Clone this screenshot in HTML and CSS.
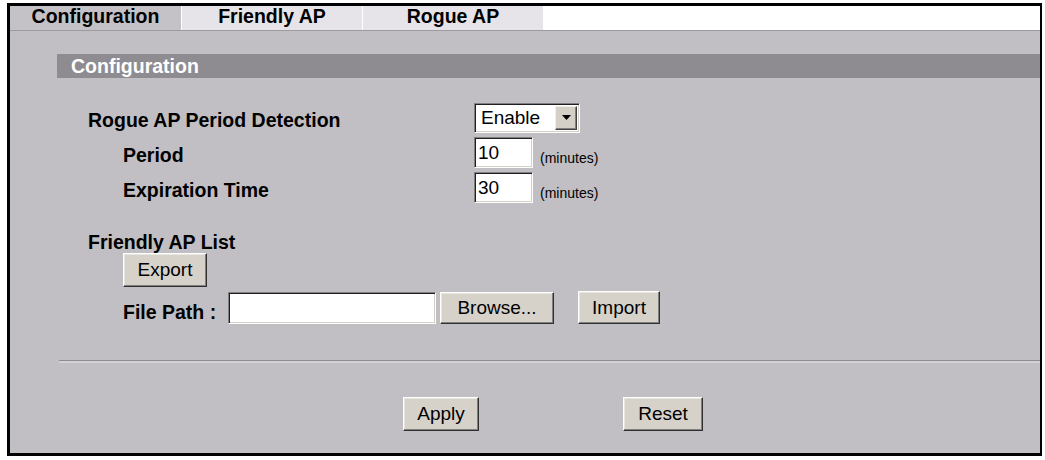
FILE: index.html
```html
<!DOCTYPE html>
<html>
<head>
<meta charset="utf-8">
<link rel="stylesheet" href="styles.css">
</head>
<body>
<div class="frame">
  <div class="tabs">
    <div class="tab active">Configuration</div>
    <div class="tab">Friendly AP</div>
    <div class="tab">Rogue AP</div>
    <div class="tab-rest"></div>
  </div>
  <div class="panel">
    <div class="section-head">Configuration</div>
    <div class="form">
      <div class="row">
        <div class="label">Rogue AP Period Detection</div>
        <div class="select"><span class="select-text">Enable</span><span class="select-btn"><svg width="9" height="5" viewBox="0 0 9 5"><path d="M0 0H9L4.5 5Z" fill="#000"/></svg></span></div>
      </div>
      <div class="row">
        <div class="label sub">Period</div>
        <div class="field short">10</div>
        <span class="unit">(minutes)</span>
      </div>
      <div class="row">
        <div class="label sub">Expiration Time</div>
        <div class="field short">30</div>
        <span class="unit">(minutes)</span>
      </div>
      <div class="list-title">Friendly AP List</div>
      <div class="export-row"><button class="btn export">Export</button></div>
      <div class="path-row">
        <span class="path-label">File Path :</span>
        <div class="field path"></div>
        <button class="btn browse">Browse...</button>
        <button class="btn import">Import</button>
      </div>
    </div>
    <div class="sep"></div>
    <div class="actions">
      <button class="btn apply">Apply</button>
      <button class="btn reset">Reset</button>
    </div>
  </div>
</div>
</body>
</html>
```

FILE: styles.css
```css
html, body {
  margin: 0;
  padding: 0;
  background: #ffffff;
}

body {
  font-family: "Liberation Sans", Arial, sans-serif;
  color: #000;
}

.frame {
  margin: 3px 3px 0 7px;
  width: 1035px;
  height: 453px;
  box-sizing: border-box;
  border: 3px solid #000;
  border-right-width: 2px;
  background: #c1bfc3;
  display: flex;
  flex-direction: column;
  overflow: hidden;
}

.tabs {
  display: flex;
  height: 24px;
  border-bottom: 1px solid #9d9b9f;
  background: #ffffff;
}

.tab {
  height: 24px;
  font-weight: bold;
  font-size: 19.5px;
  line-height: 20px;
  text-align: center;
  background: #e6e4e8;
  border-left: 1px solid #ffffff;
  width: 180px;
}

.tab.active {
  width: 171px;
  border-left: none;
  background: #c4c2c6;
}

.tab-rest {
  flex: 1;
  background: #ffffff;
}

.panel {
  flex: 1;
  padding-left: 47px;
}

.section-head {
  margin-top: 23px;
  height: 24px;
  box-sizing: border-box;
  padding: 2px 0 0 14px;
  background: #8e8c90;
  color: #ffffff;
  font-weight: bold;
  font-size: 19.5px;
  line-height: 20px;
}

.form {
  margin-top: 22px;
  padding-left: 31px;
}

.row {
  display: flex;
  align-items: center;
  height: 35px;
}

.label {
  width: 386px;
  font-weight: bold;
  font-size: 19.5px;
  line-height: 20px;
  padding-top: 5px;
}

.label.sub {
  width: 351px;
  padding-left: 35px;
}

.select {
  width: 106px;
  height: 30px;
  box-sizing: border-box;
  background: #ffffff;
  border-top: 1px solid #808080;
  border-left: 1px solid #808080;
  border-bottom: 1px solid #ffffff;
  border-right: 1px solid #ffffff;
  box-shadow: inset 1px 1px 0 #202020, inset -1px -1px 0 #d4d0c8;
  display: flex;
  align-items: center;
  padding: 2px;
}

.select-text {
  flex: 1;
  font-size: 19px;
  line-height: 22px;
  padding-left: 4px;
}

.select-btn {
  width: 22px;
  height: 24px;
  box-sizing: border-box;
  background: #d4d0c8;
  border-top: 1px solid #f0eee8;
  border-left: 1px solid #f0eee8;
  border-right: 1px solid #404040;
  border-bottom: 1px solid #404040;
  box-shadow: inset -1px -1px 0 #808080;
  display: flex;
  align-items: center;
  justify-content: center;
}

.field {
  height: 31px;
  box-sizing: border-box;
  background: #ffffff;
  border-top: 1px solid #808080;
  border-left: 1px solid #808080;
  border-bottom: 1px solid #ffffff;
  border-right: 1px solid #ffffff;
  box-shadow: inset 1px 1px 0 #202020, inset -1px -1px 0 #d4d0c8;
  font-size: 19px;
  line-height: 24px;
  padding: 3px 0 0 3px;
}

.field.short {
  width: 59px;
}

.unit {
  font-size: 14px;
  margin-left: 7px;
  padding-top: 10px;
}

.list-title {
  margin-top: 27px;
  font-weight: bold;
  font-size: 19.5px;
  line-height: 20px;
}

.export-row {
  margin-top: 1px;
  padding-left: 35px;
}

.btn {
  font-family: "Liberation Sans", Arial, sans-serif;
  font-size: 19px;
  color: #000;
  height: 34px;
  box-sizing: border-box;
  background: #d6d2ca;
  border-top: 1px solid #ffffff;
  border-left: 1px solid #ffffff;
  border-right: 1px solid #303030;
  border-bottom: 1px solid #303030;
  box-shadow: inset -1px -1px 0 #808080, inset 1px 1px 0 #e8e6e0;
  padding: 0;
  margin: 0;
  display: block;
}

.btn.export { width: 84px; }

.path-row {
  margin-top: 4px;
  padding-left: 35px;
  display: flex;
  align-items: center;
  height: 33px;
}

.path-label {
  width: 105px;
  font-weight: bold;
  font-size: 19.5px;
  line-height: 20px;
  padding-top: 8px;
}

.field.path {
  width: 208px;
  height: 32px;
}

.btn.browse {
  width: 114px;
  height: 32px;
  margin-left: 4px;
}

.btn.import {
  width: 82px;
  height: 33px;
  margin-left: 24px;
}

.sep {
  margin: 36px 0 0 2px;
  height: 1px;
  background: #8f8d91;
  border-bottom: 2px solid #d2d0d4;
}

.actions {
  margin-top: 34px;
  padding-left: 346px;
  display: flex;
  gap: 144px;
}

.btn.apply { width: 76px; }
.btn.reset { width: 80px; }
```
